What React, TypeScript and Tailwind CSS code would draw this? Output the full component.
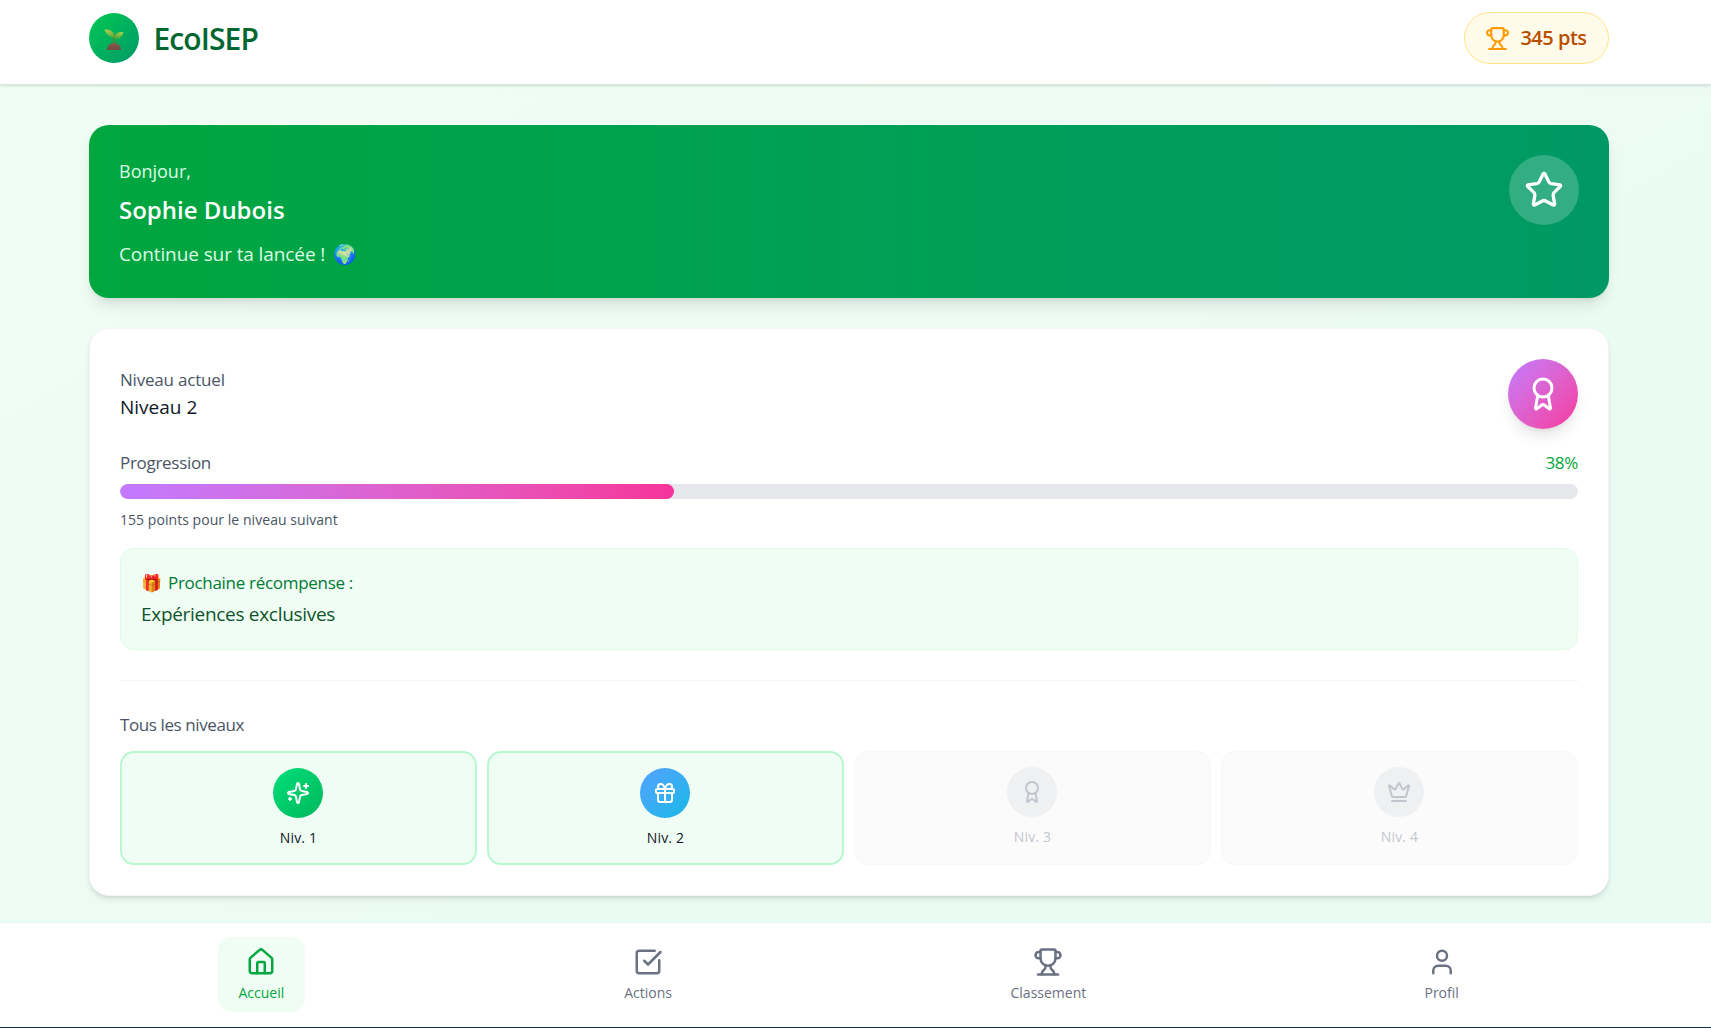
import { Award, Crown, Gift, House, SquareCheckBig, Star, Trophy, User } from 'lucide-react';

// Older lucide sparkles shape: small plus at the lower left instead of a circle
const SparklesIcon = ({ size = 24, className = '' }: { size?: number; strokeWidth?: number; className?: string }) => (
  <svg width={size} height={size} viewBox="0 0 24 24" fill="none" stroke="currentColor" strokeWidth={2} strokeLinecap="round" strokeLinejoin="round" className={className}>
    <path d="M11.017 2.814a1 1 0 0 1 1.966 0l1.051 5.558a2 2 0 0 0 1.594 1.594l5.558 1.051a1 1 0 0 1 0 1.966l-5.558 1.051a2 2 0 0 0-1.594 1.594l-1.051 5.558a1 1 0 0 1-1.966 0l-1.051-5.558a2 2 0 0 0-1.594-1.594l-5.558-1.051a1 1 0 0 1 0-1.966l5.558-1.051a2 2 0 0 0 1.594-1.594z" />
    <path d="M20 3v4" />
    <path d="M22 5h-4" />
    <path d="M4 17v2" />
    <path d="M5 18H3" />
  </svg>
);

const SproutLogo = () => (
  <svg width="24" height="24" viewBox="0 0 24 24" className="mt-[1px]">
    <defs>
      <linearGradient id="leafLeft" x1="0" y1="0" x2="1" y2="1">
        <stop offset="0" stopColor="#b4d455" />
        <stop offset="1" stopColor="#6aa72f" />
      </linearGradient>
      <linearGradient id="leafRight" x1="1" y1="0" x2="0" y2="1">
        <stop offset="0" stopColor="#a8d84a" />
        <stop offset="1" stopColor="#4f9a33" />
      </linearGradient>
      <linearGradient id="soil" x1="0" y1="0" x2="0" y2="1">
        <stop offset="0" stopColor="#8a5a48" />
        <stop offset="1" stopColor="#6d4b40" />
      </linearGradient>
    </defs>
    <path d="M11.2 9.5h1.7l.1 9h-1.9z" fill="#4e8f2e" />
    <path d="M2.5 2.5c4-.4 8.6.3 9.6 5.8l-.2 1.7C8 10.2 4.3 7.8 2.5 2.5z" fill="url(#leafLeft)" />
    <path d="M21.5 5.2c-4-.6-8.5.2-9.4 5.3v1.5c4.4-.2 7.8-1.8 9.4-6.8z" fill="url(#leafRight)" />
    <path d="M5 23c.2-4.4 3.2-7 7-7s6.8 2.6 7 7z" fill="url(#soil)" />
  </svg>
);

const levels = [
  { label: 'Niv. 1', icon: SparklesIcon, active: true, circle: 'bg-gradient-to-br from-[#00de7a] to-[#00b85c]' },
  { label: 'Niv. 2', icon: Gift, active: true, circle: 'bg-gradient-to-br from-[#50a2ff] to-[#00b8e6]' },
  { label: 'Niv. 3', icon: Award, active: false, circle: '' },
  { label: 'Niv. 4', icon: Crown, active: false, circle: '' },
];

const navItems = [
  { label: 'Accueil', icon: House, active: true, width: 'w-[87px]' },
  { label: 'Actions', icon: SquareCheckBig, active: false, width: 'w-[87px]' },
  { label: 'Classement', icon: Trophy, active: false, width: 'w-[114px]' },
  { label: 'Profil', icon: User, active: false, width: 'w-[73px]' },
];

export default function App() {
  return (
    <div className="flex h-screen flex-col overflow-hidden bg-gradient-to-br from-[#f0fdf4] to-[#e8fbf3] font-['Open_Sans','Noto_Sans',sans-serif] text-[16px]">
      {/* Header */}
      <header className="h-[85px] shrink-0 border-b border-[#d5ebe0] bg-white shadow-sm">
        <div className="mx-auto flex h-full w-[1520px] -translate-x-[7px] items-center justify-between pb-[8px]">
          <div className="flex items-center gap-[15px]">
            <div className="flex h-[50px] w-[50px] items-center justify-center rounded-full bg-gradient-to-br from-[#00c950] to-[#009966]">
              <SproutLogo />
            </div>
            <span className="text-[30px] font-semibold tracking-[-0.9px] text-[#016630]">EcoISEP</span>
          </div>
          <div className="flex h-[52px] w-[145px] items-center justify-center gap-[10px] rounded-full border border-[#fee685] bg-[#fffbeb]">
            <Trophy size={25} strokeWidth={2} className="text-[#fe9a00]" />
            <span className="text-[20px] font-semibold tracking-[-0.5px] text-[#bb4d00]">345 pts</span>
          </div>
        </div>
      </header>

      {/* Main */}
      <main className="flex-1 pt-[40px]">
        <div className="ml-[89px] w-[1520px]">
          <section className="flex h-[173px] justify-between rounded-[20px] bg-gradient-to-r from-[#00a63e] to-[#009966] p-[30px] shadow-lg">
            <div className="pt-[4px] text-white">
              <p className="text-[18px] leading-[24px] text-[#dcfce7]">Bonjour,</p>
              <h1 className="mt-[11px] text-[24px] font-semibold leading-[32px]">Sophie Dubois</h1>
              <p className="mt-[16px] flex items-center text-[19px] leading-[24px] tracking-[-0.1px] text-[#dcfce7]">
                Continue sur ta lancée !<span className="ml-[8px] text-[19px]">🌍</span>
              </p>
            </div>
            <div className="flex h-[70px] w-[70px] items-center justify-center rounded-full bg-white/20">
              <Star size={40} strokeWidth={2} className="text-white" />
            </div>
          </section>

          <section className="mt-[30px] rounded-[20px] border border-[#f3f4f6] bg-white p-[30px] shadow-md">
            <div className="flex justify-between">
              <div className="pt-[9px]">
                <p className="text-[17px] leading-[24px] tracking-[-0.2px] text-[#4a5565]">Niveau actuel</p>
                <p className="mt-[1px] text-[19px] leading-[28px] text-[#101828]">Niveau 2</p>
              </div>
              <div className="flex h-[70px] w-[70px] items-center justify-center rounded-full bg-gradient-to-br from-[#c27aff] to-[#f6339a] shadow-lg">
                <Award size={36} strokeWidth={2} className="text-white" />
              </div>
            </div>

            <div className="mt-[22px] flex justify-between text-[17px] leading-[24px] tracking-[-0.3px]">
              <span className="text-[#4a5565]">Progression</span>
              <span className="text-[#00a63e]">38%</span>
            </div>
            <div className="mt-[9px] h-[15px] overflow-hidden rounded-full bg-[#e5e7eb]">
              <div className="h-full rounded-full bg-gradient-to-r from-[#c27aff] to-[#f6339a]" style={{ width: '38%' }} />
            </div>
            <p className="mt-[11px] text-[14px] leading-[20px] tracking-[0.05px] text-[#4a5565]">155 points pour le niveau suivant</p>

            <div className="mt-[18px] h-[102px] rounded-[14px] border border-[#dcfce7] bg-[#f0fdf4] px-[20px] pt-[22px]">
              <p className="flex items-center text-[17px] leading-[24px] tracking-[-0.3px] text-[#007a35]">
                <span className="mr-[8px] w-[19px] text-center">🎁</span>Prochaine récompense :
              </p>
              <p className="mt-[5px] text-[19px] leading-[28px] tracking-[-0.3px] text-[#0d542b]">Expériences exclusives</p>
            </div>

            <div className="mt-[30px] border-t border-[#f3f4f6] pt-[32px]">
              <p className="text-[17px] leading-[24px] tracking-[-0.4px] text-[#4a5565]">Tous les niveaux</p>
              <div className="mt-[14px] grid grid-cols-4 gap-[10px]">
                {levels.map(({ label, icon: Icon, active, circle }) => (
                  <div
                    key={label}
                    className={
                      active
                        ? 'flex h-[114px] flex-col items-center rounded-[14px] border-2 border-[#b9f8cf] bg-[#f0fdf4] pt-[15px]'
                        : 'flex h-[114px] flex-col items-center rounded-[14px] border border-[#f3f4f6] bg-[#f9fafb] pt-[15px] opacity-60'
                    }
                  >
                    <div
                      className={
                        active
                          ? `mr-[2px] flex h-[50px] w-[50px] items-center justify-center rounded-full ${circle}`
                          : 'mr-[2px] flex h-[50px] w-[50px] items-center justify-center rounded-full bg-[#e5e7eb]'
                      }
                    >
                      <Icon size={24} strokeWidth={2} className={active ? 'text-white' : 'text-[#99a1af]'} />
                    </div>
                    <span className={active ? 'mt-[10px] text-[14px] leading-[20px] tracking-[0.2px] text-[#101828]' : 'mt-[10px] text-[14px] leading-[20px] tracking-[0.2px] text-[#99a1af]'}>
                      {label}
                    </span>
                  </div>
                ))}
              </div>
            </div>
          </section>
        </div>
      </main>

      {/* Bottom nav */}
      <nav className="h-[106px] shrink-0 border-t border-b border-t-[#e6f5ec] border-b-[#1a3a4a] bg-white">
        <div className="ml-[68px] flex h-full w-[1560px] items-center justify-around pb-[2px]">
          {navItems.map(({ label, icon: Icon, active, width }) => (
            <div
              key={label}
              className={
                active
                  ? `flex h-[75px] ${width} flex-col items-center justify-center gap-[6px] rounded-[14px] bg-[#f0fdf4] pt-[2px] text-[#00a63e]`
                  : `flex h-[75px] ${width} flex-col items-center justify-center gap-[6px] pt-[2px] text-[#6a7282]`
              }
            >
              <Icon size={30} strokeWidth={2} />
              <span className="text-[14px] leading-[20px]">{label}</span>
            </div>
          ))}
        </div>
      </nav>
    </div>
  );
}
